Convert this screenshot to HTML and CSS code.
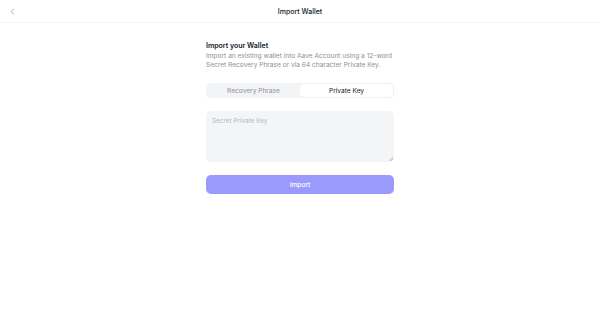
FILE: index.html
```html
<!DOCTYPE html>
<html lang="en">
<head>
    <meta charset="UTF-8">
    <meta name="viewport" content="width=device-width, initial-scale=1.0">
    <title>Import Wallet</title>
    <link rel="stylesheet" href="styles.css">
</head>
<body>
    <div class="header">
        <button class="back-btn" aria-label="Back">
            <svg width="5" height="7" viewBox="0 0 5 7" fill="none">
                <path d="M3.5 1 L1.3 3.5 L3.5 6" stroke="#a1a5ad" stroke-width="0.9" stroke-linecap="round" stroke-linejoin="round"/>
            </svg>
        </button>
        <div class="title">Import Wallet</div>
    </div>

    <div class="content">
        <h1 class="heading">Import your Wallet</h1>
        <p class="desc">Import an existing wallet into Aave Account using a 12-word Secret Recovery Phrase or via 64 character Private Key.</p>

        <div class="tabs">
            <div class="tab">Recovery Phrase</div>
            <div class="tab active">Private Key</div>
        </div>

        <div class="input-wrap">
            <textarea class="key-input" placeholder="Secret Private Key"></textarea>
            <svg class="grip" width="4" height="4" viewBox="0 0 4 4">
                <path d="M4 0 L0 4 M4 2 L2 4" stroke="#9ca3af" stroke-width="0.7"/>
            </svg>
        </div>

        <button class="import-btn">Import</button>
    </div>
</body>
</html>
```

FILE: styles.css
```css
body {
    margin: 0;
    padding: 0;
    background: #fff;
    font-family: Inter, "Noto Sans", sans-serif;
    color: #111827;
}

.header {
    position: relative;
    height: 22px;
    display: flex;
    align-items: center;
    justify-content: center;
    border-bottom: 1px solid #f3f4f6;
}
.back-btn {
    position: absolute;
    left: 10px;
    top: 8px;
    padding: 0;
    border: none;
    background: none;
    display: flex;
}
.title {
    font-size: 7px;
    font-weight: 500;
    color: #111827;
}

.content {
    width: 188px;
    margin: 0 auto;
    padding-top: 18px;
}

.heading {
    margin: 0;
    font-size: 7px;
    line-height: 10px;
    font-weight: 600;
}
.desc {
    margin: 1px 0 0;
    font-size: 6.6px;
    line-height: 8.6px;
    color: #8e9197;
}

.tabs {
    margin-top: 14px;
    height: 15px;
    padding: 1px;
    box-sizing: border-box;
    display: flex;
    background: #f3f4f6;
    border-radius: 4px;
}
.tab {
    flex: 1;
    display: flex;
    align-items: center;
    justify-content: center;
    font-size: 6.6px;
    color: #8e9197;
    border-radius: 3px;
}
.tab.active {
    background: #fff;
    color: #111827;
    box-shadow: 0 0 1px rgba(0,0,0,0.08);
}

.input-wrap {
    position: relative;
    margin-top: 13px;
}
.key-input {
    display: block;
    width: 100%;
    height: 51px;
    box-sizing: border-box;
    padding: 6px;
    border: none;
    border-radius: 5px;
    background: #f4f5f7;
    font-family: inherit;
    font-size: 6.4px;
    color: #111827;
    outline: none;
    resize: none;
}
.key-input::placeholder {
    color: #b4b8bf;
}
.grip {
    position: absolute;
    right: 1px;
    bottom: 1px;
}

.import-btn {
    display: block;
    margin-top: 13px;
    width: 100%;
    height: 19px;
    border: none;
    border-radius: 5px;
    background: #9a9afc;
    color: #fff;
    font-family: inherit;
    font-size: 6.6px;
    font-weight: 500;
}
```
